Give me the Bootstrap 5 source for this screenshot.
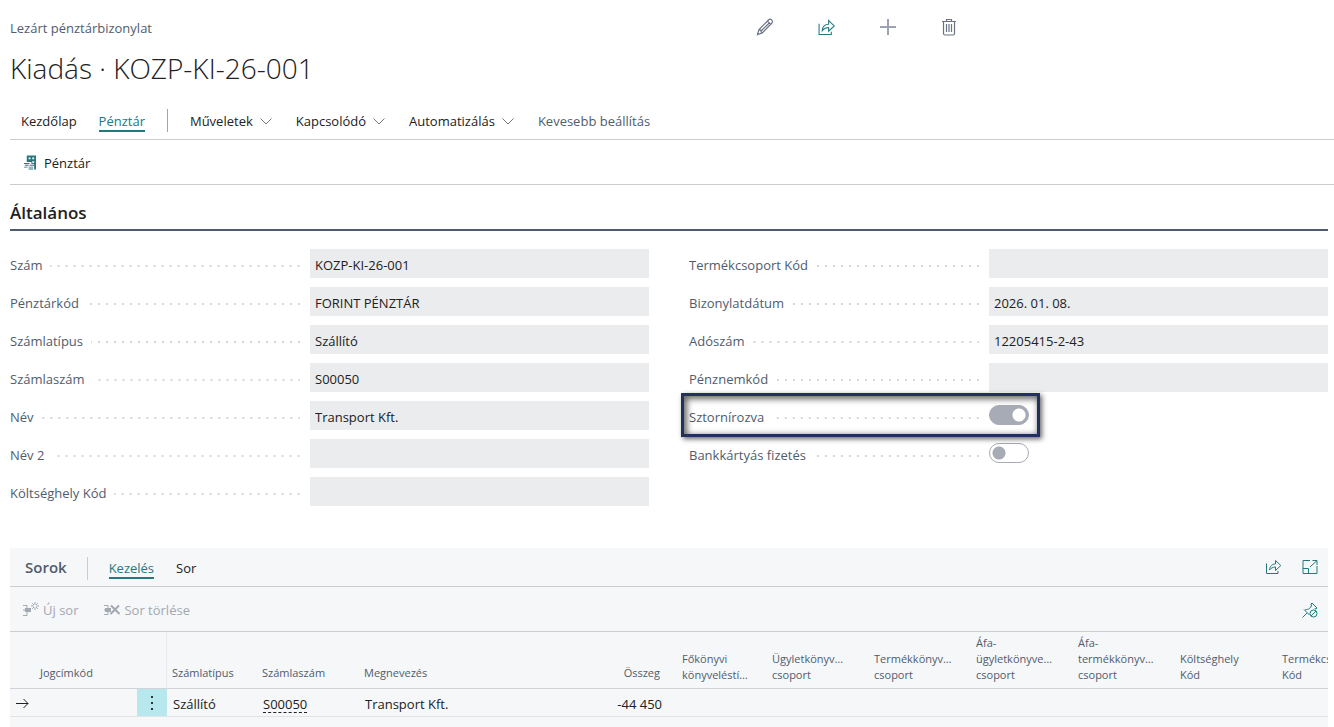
<!DOCTYPE html>
<html lang="hu">
<head>
<meta charset="utf-8">
<meta name="viewport" content="width=device-width, initial-scale=1">
<title>Kiadás · KOZP-KI-26-001</title>
<link href="https://cdn.jsdelivr.net/npm/bootstrap@5.3.0/dist/css/bootstrap.min.css" rel="stylesheet">
<style>
:root { --teal: #24797e; --ink: #212121; --soft: #505c6d; --line: #cacccf; --pane: #f5f7f9; }
body { font: 13px/20px "Open Sans", "Noto Sans", sans-serif; color: var(--ink); background: #fff; }
a, button { color: inherit; text-decoration: none; }
button { border: 0; background: none; padding: 0; }
svg { display: block; flex: none; fill: none; stroke: currentColor; }
.page-main { padding-left: 10px; }
.body-area { margin-right: 6px; }
.crumbs { flex: 0 0 56%; padding-top: 2px; }
.tools { padding-left: 5px; }
.tools button { width: 62px; height: 22px; display: flex; align-items: center; }
.soft { color: var(--soft); }
.iconic { color: #6a7285; }
.teal { color: var(--teal); }
.doc-title { font-size: 28px; line-height: 40px; font-weight: 300; margin: 10px 0 20px; }
.menu-bar { height: 32px; padding: 3px 0 0 11px; gap: 22px; border-bottom: 1px solid var(--line); }
.tab-on { box-shadow: 0 1px 0 var(--teal), inset 0 -1px 0 var(--teal); color: var(--teal); }
.menu-bar .split { width: 1px; height: 23px; margin-top: -2px; background: #a0a4ac; }
.menu-bar button { gap: 7px; margin-right: 2px; }
.menu-bar svg { color: #777; }
.action-bar { height: 45px; padding: 2px 0 0 14px; border-bottom: 1px solid var(--line); }
.group-title { font-size: 17px; line-height: 24px; font-weight: 600; padding: 16px 0 4px; margin: 0; border-bottom: 2px solid #505c6d; }
.fields { display: grid; grid-template-columns: 1fr 1fr; column-gap: 40px; padding-top: 18px; }
.field-row { display: flex; align-items: center; height: 29px; margin-bottom: 9px; }
.field-row label { flex: 0 0 290px; display: flex; align-items: center; padding-top: 2px; margin-right: 10px; color: var(--soft); white-space: nowrap; }
.field-row label::after { content: ""; flex: 1; height: 2px; margin: 2px 0 0 8px; background: linear-gradient(90deg, transparent 6px, #d6d7d9 6px) right / 8px 2px repeat-x; }
.field-row input[type=text] { flex: 1; min-width: 0; height: 29px; border: 0; border-radius: 0; padding: 2px 5px 0; background: #ebecee; color: var(--ink); }
.toggle { appearance: none; width: 40px; height: 20px; margin: 0 0 1px; border: 1px solid #a6abb6; border-radius: 10px; background: radial-gradient(circle at 9px 9px, #a6abb6 6px, transparent 7px) #fff; }
.toggle:checked { background: radial-gradient(circle at 29px 9px, #fff 6px, transparent 7px) #a6abb6; }
.callout-box { position: absolute; left: -8px; top: -8px; width: 359px; height: 44px; border: 3px solid #22315a; box-shadow: 2px 2px 5px rgba(0,0,0,.6), inset 2px 2px 6px 1px rgba(0,0,0,.6); pointer-events: none; }
.lines-pane { background: var(--pane); margin-top: 33px; }
.lines-bar { height: 39px; padding: 2px 10px 0 15px; border-bottom: 1px solid var(--line); }
.lines-bar h2 { font-size: 15px; line-height: 20px; font-weight: 600; margin: 0 20px 2px 0; }
.lines-bar .split { width: 1px; height: 23px; background: var(--line); margin-right: 21px; }
.lines-bar .next-tab { margin-left: 22px; }
.pane-icons { gap: 20px; margin-bottom: 2px; }
.lines-tools { height: 45px; padding: 2px 10px 0 13px; gap: 26px; border-bottom: 1px solid var(--line); color: #a3a8b1; }
.grid { table-layout: fixed; width: 1369px; border-collapse: separate; border-spacing: 0; }
.grid th { height: 57px; padding: 0 0 5px 5px; font-size: 11px; line-height: 16px; font-weight: 400; color: var(--soft); vertical-align: bottom; white-space: nowrap; border-bottom: 1px solid #d0d3d8; }
.grid th.one { padding-bottom: 7px; }
.grid td { height: 28px; padding: 2px 0 0 6px; border-bottom: 1px solid #e1e3e6; line-height: 18px; white-space: nowrap; }
.grid th.num { text-align: right; padding-right: 17px; }
.grid td.num { text-align: right; padding-right: 15px; }
.grid .pinned { border-right: 1px solid #e9ecef; }
.grid .row-menu { background: #b7e8ed; padding: 0; }
.grid a { text-decoration: underline dashed 1px; text-underline-offset: 3px; }
</style>
</head>
<body class="min-vh-100 d-flex flex-column">
<svg width="0" height="0" class="position-absolute" aria-hidden="true">
  <symbol id="share" viewBox="0 0 16 16"><path d="M1 4.500v10h11.500V12M4 11c.3-4 2.700-6 6-6V1.500l5.300 5L10 11.500V8C7.500 8 5.500 9 4 11z"/></symbol>
  <symbol id="chevron" viewBox="0 0 12 8"><path d="M.5 1.500 6 7l5.500-5.500"/></symbol>
</svg>
<main class="page-main d-flex flex-column flex-grow-1">
  <header>
    <div class="d-flex pt-3">
      <div class="crumbs soft">Lezárt pénztárbizonylat</div>
      <div class="tools d-flex iconic">
        <button aria-label="Szerkesztés"><svg width="18" height="18" viewBox="0 0 18 18"><path stroke-width="1.200" d="M1.500 16.500 3 11.500 12.500 2a2 2 0 0 1 3.200 3.300L6.200 15zM3 11.500l1.800.7.3 1.800 1.100 1M11.500 3l3.200 3.300M13.500 4.700 5 13"/></svg></button>
        <button class="teal" aria-label="Megosztás"><svg width="17" height="17"><use href="#share"/></svg></button>
        <button aria-label="Új"><svg width="16" height="16" viewBox="0 0 16 16"><path stroke-width="2" opacity=".65" d="M8 0v16M0 8h16"/></svg></button>
        <button aria-label="Törlés"><svg width="14" height="17" viewBox="0 0 14 17"><path stroke-width="1.200" d="M0 2.500h14M4.500 2V.5h5V2M1.500 3v11.500q0 1.500 1.500 1.500h8q1.500 0 1.500-1.500V3M4.500 5v8M7 5v8M9.500 5v8"/></svg></button>
      </div>
    </div>
    <h1 class="doc-title">Kiadás · KOZP-KI-26-001</h1>
  </header>
  <nav class="menu-bar d-flex align-items-start text-nowrap">
    <a href="#">Kezdőlap</a>
    <a href="#" class="tab-on">Pénztár</a>
    <span class="split"></span>
    <button class="d-flex align-items-center">Műveletek <svg width="12" height="8"><use href="#chevron"/></svg></button>
    <button class="d-flex align-items-center">Kapcsolódó <svg width="12" height="8"><use href="#chevron"/></svg></button>
    <button class="d-flex align-items-center">Automatizálás <svg width="12" height="8"><use href="#chevron"/></svg></button>
    <a href="#" class="soft">Kevesebb beállítás</a>
  </nav>
  <div class="action-bar d-flex align-items-center">
    <button class="d-flex align-items-center gap-2"><svg class="teal" width="12" height="16" viewBox="0 0 13 16"><path fill="currentColor" stroke="none" fill-rule="evenodd" d="M3 0h10v15h-2V9H8V7H3zM5 2v2h2V2zM9 2v2h2V2zM9 6v2h2V6zM0 8h6v1H0zM1 10h5v1H1zM0 12h5v1H0zM5 10h6v1H5zM4 12h6v1H4zM5 14h5v1H5z"/></svg>Pénztár</button>
  </div>
  <section class="body-area">
    <h2 class="group-title">Általános</h2>
    <div class="fields">
      <div>
        <div class="field-row"><label for="f1">Szám</label><input type="text" id="f1" value="KOZP-KI-26-001" readonly></div>
        <div class="field-row"><label for="f2">Pénztárkód</label><input type="text" id="f2" value="FORINT PÉNZTÁR" readonly></div>
        <div class="field-row"><label for="f3">Számlatípus</label><input type="text" id="f3" value="Szállító" readonly></div>
        <div class="field-row"><label for="f4">Számlaszám</label><input type="text" id="f4" value="S00050" readonly></div>
        <div class="field-row"><label for="f5">Név</label><input type="text" id="f5" value="Transport Kft." readonly></div>
        <div class="field-row"><label for="f6">Név 2</label><input type="text" id="f6" readonly></div>
        <div class="field-row"><label for="f7">Költséghely Kód</label><input type="text" id="f7" readonly></div>
      </div>
      <div>
        <div class="field-row"><label for="g1">Termékcsoport Kód</label><input type="text" id="g1" readonly></div>
        <div class="field-row"><label for="g2">Bizonylatdátum</label><input type="text" id="g2" value="2026. 01. 08." readonly></div>
        <div class="field-row"><label for="g3">Adószám</label><input type="text" id="g3" value="12205415-2-43" readonly></div>
        <div class="field-row"><label for="g4">Pénznemkód</label><input type="text" id="g4" readonly></div>
        <div class="field-row position-relative"><label for="g5">Sztornírozva</label><input type="checkbox" role="switch" class="toggle" id="g5" checked><span class="callout-box"></span></div>
        <div class="field-row"><label for="g6">Bankkártyás fizetés</label><input type="checkbox" role="switch" class="toggle" id="g6"></div>
      </div>
    </div>
  </section>
  <section class="body-area lines-pane flex-grow-1">
    <div class="lines-bar d-flex align-items-center">
      <h2 class="soft">Sorok</h2><span class="split"></span>
      <a href="#" class="tab-on">Kezelés</a>
      <a href="#" class="next-tab">Sor</a>
      <div class="pane-icons ms-auto d-flex teal">
        <button aria-label="Megosztás"><svg width="17" height="16"><use href="#share"/></svg></button>
        <button aria-label="Nagyítás"><svg width="16" height="14" viewBox="0 0 16 14"><path d="M8 .5H1v13h14V6M1 8.500h5.500v5M8 7l7-6.500M10.500.5H15V5"/></svg></button>
      </div>
    </div>
    <div class="lines-tools d-flex align-items-center">
      <button class="d-flex align-items-center gap-1"><svg width="16" height="16" viewBox="0 0 16 16"><path d="M0 3.500h4v3M4 10v3.500H0"/><path fill="currentColor" stroke="none" d="M2 6h6v4H2zM0 7.500h3v1H0z"/><path d="M12 0v8M8 4h8M9.200 1.200l5.600 5.600M14.800 1.200 9.200 6.800"/><circle cx="12" cy="4" r="1.500" fill="#f5f7f9" stroke="none"/></svg>Új sor</button>
      <button class="d-flex align-items-center gap-1"><svg width="16" height="14" viewBox="0 0 16 14"><path d="M0 2.500h4v3M4 9v2.500H0"/><path fill="currentColor" stroke="none" d="M1 5h6v4H1zM0 6.500h3v1H0z"/><path stroke-width="2" d="m7 2.500 8.500 8.500M15 2.500 6.500 11"/></svg>Sor törlése</button>
      <button class="ms-auto teal" aria-label="Rögzítés feloldása"><svg width="16" height="16" viewBox="0 0 16 16"><path d="M.5 15.500 5 11M2 7.500l5.500 5.500M3 8c2-.8 3.500-.5 4.500-1.500L9.500 4 9 2l1-1 5 5-1 1-1.500-.3"/><circle cx="11.500" cy="11.500" r="3.500"/><path d="m9 14 5-5"/></svg></button>
    </div>
    <div class="overflow-hidden">
      <table class="grid">
        <colgroup><col style="width:25px"><col style="width:102px"><col style="width:30px"><col style="width:90px"><col style="width:102px"><col style="width:216px"><col style="width:102px"><col style="width:90px"><col style="width:102px"><col style="width:102px"><col style="width:102px"><col style="width:102px"><col style="width:102px"><col style="width:102px"></colgroup>
        <thead><tr>
          <th></th><th class="one">Jogcímkód</th><th class="pinned"></th><th class="one">Számlatípus</th><th class="one">Számlaszám</th><th class="one">Megnevezés</th><th class="one num">Összeg</th>
          <th>Főkönyvi<br>könyveléstí…</th><th>Ügyletkönyv…<br>csoport</th><th>Termékkönyv…<br>csoport</th><th>Áfa-<br>ügyletkönyve…<br>csoport</th><th>Áfa-<br>termékkönyv…<br>csoport</th><th>Költséghely<br>Kód</th><th>Termékcsoport<br>Kód</th>
        </tr></thead>
        <tbody>
          <tr><td><svg width="13" height="11" viewBox="0 0 13 11"><path d="M0 5.500h12M7.500 1 12 5.500 7.500 10"/></svg></td><td></td><td class="row-menu"><button class="w-100 d-flex justify-content-center" aria-label="Sor műveletei"><svg width="2" height="14" viewBox="0 0 2 14"><path stroke="none" fill="#333" d="M0 0h2v2H0zM0 6h2v2H0zM0 12h2v2H0z"/></svg></button></td><td>Szállító</td><td><a href="#">S00050</a></td><td>Transport Kft.</td><td class="num">-44 450</td><td></td><td></td><td></td><td></td><td></td><td></td><td></td></tr>
        </tbody>
      </table>
    </div>
  </section>
</main>
<script src="https://cdn.jsdelivr.net/npm/bootstrap@5.3.0/dist/js/bootstrap.bundle.min.js"></script>
</body>
</html>
